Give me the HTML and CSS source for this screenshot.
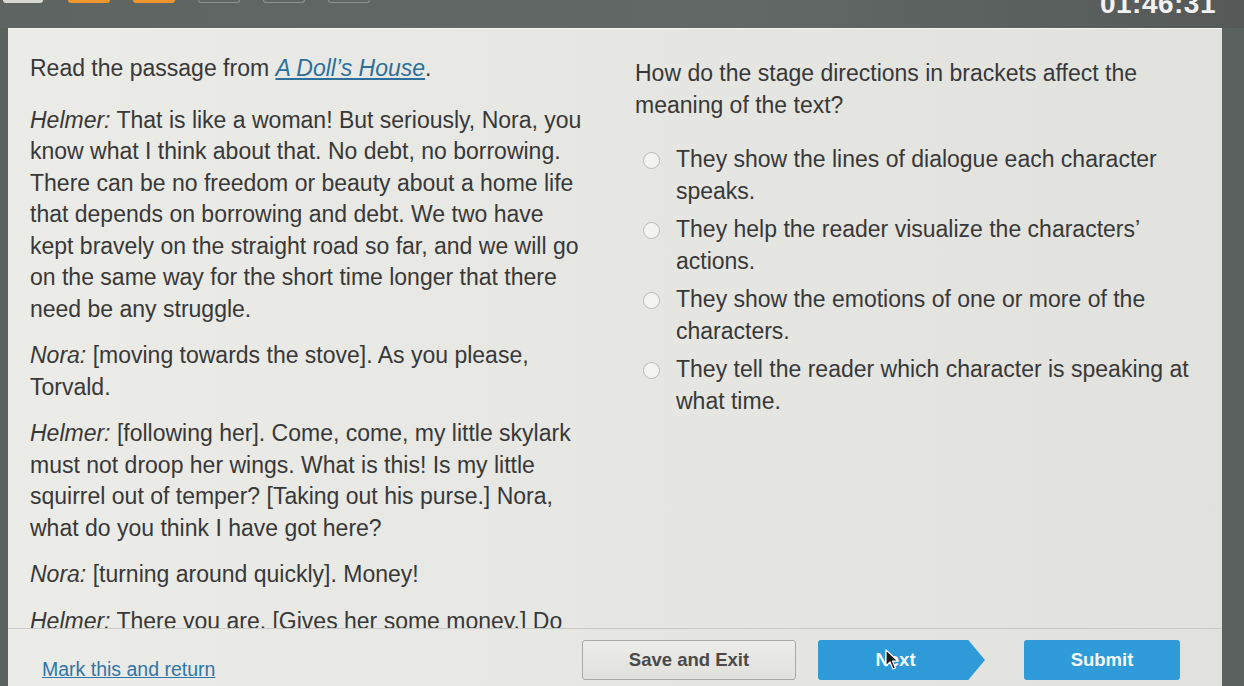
FILE: index.html
```html
<!DOCTYPE html>
<html lang="en">

<head>
    <meta charset="UTF-8">
    <meta name="viewport" content="width=device-width, initial-scale=1.0">
    <title>A Doll's House - Question</title>
    <link rel="stylesheet" href="styles.css">
</head>

<body>
    <div class="topbar">
        <div class="tabs">
            <span class="tab done"></span>
            <span class="tab orange"></span>
            <span class="tab orange"></span>
            <span class="tab empty"></span>
            <span class="tab empty"></span>
            <span class="tab empty"></span>
        </div>
        <div class="timer">01:46:31</div>
    </div>

    <div class="panel">
        <div class="content">
            <div class="passage">
                <p class="intro">Read the passage from <a href="#" class="title-link">A Doll’s House</a>.</p>
                <p><em>Helmer:</em> That is like a woman! But seriously, Nora, you know what I think about that. No debt, no borrowing. There can be no freedom or beauty about a home life that depends on borrowing and debt. We two have kept bravely on the straight road so far, and we will go on the same way for the short time longer that there need be any struggle.</p>
                <p><em>Nora:</em> [moving towards the stove]. As you please, Torvald.</p>
                <p><em>Helmer:</em> [following her]. Come, come, my little skylark must not droop her wings. What is this! Is my little squirrel out of temper? [Taking out his purse.] Nora, what do you think I have got here?</p>
                <p><em>Nora:</em> [turning around quickly]. Money!</p>
                <p><em>Helmer:</em> There you are. [Gives her some money.] Do you think I don’t know what a lot is wanted for housekeeping at Christmas-time?</p>
            </div>

            <div class="question">
                <p class="prompt">How do the stage directions in brackets affect the meaning of the text?</p>
                <label class="option"><span class="radio"></span><span>They show the lines of dialogue each character speaks.</span></label>
                <label class="option"><span class="radio"></span><span>They help the reader visualize the characters’ actions.</span></label>
                <label class="option"><span class="radio"></span><span>They show the emotions of one or more of the characters.</span></label>
                <label class="option"><span class="radio"></span><span>They tell the reader which character is speaking at what time.</span></label>
            </div>
        </div>

        <div class="footer">
            <a href="#" class="mark-link">Mark this and return</a>
            <button class="btn btn-save">Save and Exit</button>
            <button class="btn btn-next">Next</button>
            <button class="btn btn-submit">Submit</button>
            <svg class="cursor" width="14" height="22" viewBox="0 0 14 22">
                <path d="M1 1 L1 17 L5 13 L8 20 L10.5 19 L7.5 12 L13 12 Z" fill="#1b1b1b" stroke="#ffffff" stroke-width="1.2" stroke-linejoin="round"/>
            </svg>
        </div>
    </div>
</body>

</html>
```

FILE: styles.css
```css
body {
    margin: 0;
    width: 1244px;
    height: 686px;
    overflow: hidden;
    background-color: #5b615f;
    font-family: 'Liberation Sans', Arial, sans-serif;
    color: #383838;
}

.topbar {
    height: 28px;
    display: flex;
    justify-content: space-between;
    align-items: flex-start;
    background: linear-gradient(to right, #5e6462, #626866 60%, #555a59);
}

.tabs {
    display: flex;
    gap: 23px;
    padding-left: 3px;
}

.tab {
    width: 42px;
    height: 3px;
    border-radius: 0 0 3px 3px;
    box-sizing: border-box;
}

.tab.done {
    width: 40px;
    background-color: #d8d8d4;
    margin-right: 2px;
}

.tab.orange {
    background-color: #f0962e;
}

.tab.empty {
    border: 1px solid #8d9291;
    border-top: none;
}

.timer {
    margin-top: -12px;
    margin-right: 28px;
    font-size: 28px;
    font-weight: bold;
    color: #f2f2f2;
    letter-spacing: 0.5px;
}

.panel {
    margin: 0 22px 0 8px;
    height: 658px;
    display: flex;
    flex-direction: column;
    background: linear-gradient(to right, #ebebe7, #e6e6e2 50%, #e1e2de);
    border-top: 1px solid #f4f4f2;
    box-sizing: border-box;
}

.content {
    flex: 1;
    overflow: hidden;
    display: flex;
    gap: 45px;
    padding: 24px 0 0 22px;
}

.passage {
    width: 560px;
    flex-shrink: 0;
    font-size: 23px;
    line-height: 31.5px;
}

.passage p {
    margin: 0 0 15px;
}

.passage p.intro {
    margin-bottom: 20px;
}

.title-link {
    color: #2c6f9c;
    font-style: italic;
    text-decoration: underline;
}

.question {
    width: 560px;
    padding-top: 5px;
    font-size: 23px;
    line-height: 31.5px;
}

.prompt {
    margin: 0 0 23px;
}

.option {
    display: flex;
    gap: 16px;
    margin-bottom: 7px;
    padding-left: 8px;
}

.radio {
    flex-shrink: 0;
    width: 15px;
    height: 15px;
    margin-top: 8px;
    border: 1px solid #b9bab7;
    border-radius: 50%;
    background-color: #f3f3f1;
}

.footer {
    position: relative;
    height: 58px;
    flex-shrink: 0;
    display: flex;
    align-items: flex-start;
    padding: 11px 42px 0 34px;
    border-top: 1px solid #c9cac6;
    box-sizing: border-box;
}

.mark-link {
    margin-top: 18px;
    margin-right: auto;
    font-size: 19.5px;
    color: #2f76a6;
    text-decoration: underline;
}

.btn {
    height: 40px;
    border: none;
    font-family: 'Liberation Sans', Arial, sans-serif;
    font-size: 18.5px;
    font-weight: bold;
    cursor: pointer;
}

.btn-save {
    width: 214px;
    background: linear-gradient(#ecece9, #e0e0dd);
    border: 1px solid #a9aaa7;
    border-radius: 3px;
    color: #4a4a4a;
}

.btn-next {
    width: 167px;
    margin-left: 22px;
    padding-right: 18px;
    background-color: #2f9ad8;
    color: #f4f8fb;
    clip-path: polygon(0 0, 90% 0, 100% 50%, 90% 100%, 0 100%);
    border-radius: 3px 0 0 3px;
}

.btn-submit {
    width: 156px;
    margin-left: 39px;
    background-color: #2f9bd9;
    color: #f4f8fb;
    border-radius: 3px;
}

.cursor {
    position: absolute;
    left: 877px;
    top: 20px;
}
```
